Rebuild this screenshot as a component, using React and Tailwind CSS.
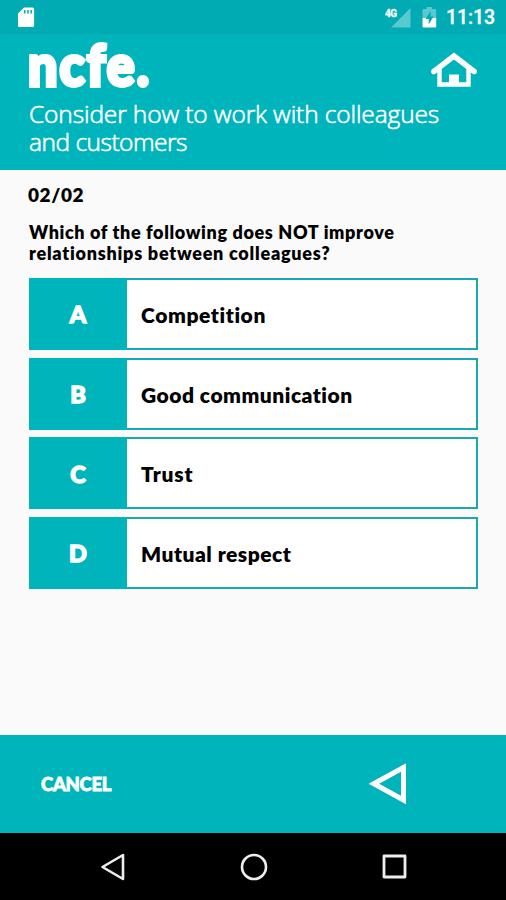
const options = [
  { letter: 'A', text: 'Competition', spacing: 'tracking-[0.6px]' },
  { letter: 'B', text: 'Good communication', spacing: 'tracking-[0.5px]' },
  { letter: 'C', text: 'Trust', spacing: 'tracking-[0.8px]' },
  { letter: 'D', text: 'Mutual respect', spacing: 'tracking-[0.5px]' },
];

function StatusBar() {
  return (
    <div className="flex h-[34px] shrink-0 items-center bg-[#00abb3] pl-[17px] pr-[11px] text-white">
      <svg className="h-[22px] w-[18px]" viewBox="0 0 18 22">
        <path d="M7 1.5h8.500a1.600 1.600 0 0 1 1.600 1.600v16.300a1.600 1.600 0 0 1-1.600 1.600h-13A1.600 1.600 0 0 1 1 19.400V7.500z" fill="#fff" />
        <path d="M7.700 4v3.500M11 4v3.500M14.200 4v3.500" stroke="#00abb3" strokeWidth="1.500" />
      </svg>
      <div className="ml-auto flex items-center">
        <svg className="h-[22px] w-[26px]" viewBox="0 0 26 22">
          <path d="M25.500 2v19.500H6z" fill="#58c9ce" />
          <text x="0" y="10.500" fill="#fff" stroke="#fff" strokeWidth="0.300" fontFamily="Roboto" fontWeight="700" fontSize="10" textLength="12">4G</text>
        </svg>
        <svg className="ml-[11px] h-[22px] w-[15px]" viewBox="0 0 15 22">
          <path d="M4.500 1h5.500v2h3.200q1 0 1 1v8H.5V4q0-1 1-1h3z" fill="#58c9ce" />
          <path d="M.5 12h13.700v8.500q0 1-1 1H1.500q-1 0-1-1z" fill="#fff" />
          <path d="M8.700 5 3.500 13h3.200v5.500L11.500 10.500H8.700z" fill="#00abb3" />
        </svg>
        <span className="ml-[9px] mt-[2px] font-['Roboto',sans-serif] text-[19.5px] font-medium leading-[32px] tracking-[-0.1px] [-webkit-text-stroke:0.3px_white]">11:13</span>
      </div>
    </div>
  );
}

function Header() {
  return (
    <header className="flex h-[136px] shrink-0 flex-col bg-[#00b4bc] pl-[29px] pr-[29px] text-white">
      <div className="flex h-[66px] justify-between">
        <span className="-ml-px origin-top scale-y-[1.1] font-['Lato',sans-serif] text-[52px] font-black leading-[55px] tracking-[2px] [-webkit-text-stroke:3.6px_white]">ncfe.</span>
        <svg className="mt-[18px] h-[36px] w-[46px]" viewBox="0 0 46 36" fill="none" stroke="#fff">
          <path d="M2.800 19.500 23 4 43.200 19.500" strokeWidth="5.400" strokeLinecap="round" />
          <path d="M8.500 16.500V32.500H37.500V16.500" strokeWidth="4.400" />
          <path d="M18 22.500h10v10H18z" fill="#fff" stroke="none" />
        </svg>
      </div>
      <h1 className="whitespace-nowrap font-['Open_Sans',sans-serif] text-[24.5px] font-light leading-[28px] tracking-[-0.120px] [-webkit-text-stroke:0.6px_white]">
        Consider how to work with colleagues
        <br />
        <span className="tracking-[-0.5px]">and customers</span>
      </h1>
    </header>
  );
}

function Option({ letter, text, spacing }) {
  return (
    <div className="flex h-[72px] border-2 border-[#18a9af] bg-white">
      <div className="-my-[2px] -ml-[2px] flex w-[98px] items-center justify-center bg-[#00b4bc] pt-[2px] font-['Lato',sans-serif] text-[23.5px] font-black text-white [-webkit-text-stroke:1.4px_white]">
        {letter}
      </div>
      <div className={`flex items-center whitespace-nowrap pl-[14px] pt-[2px] text-[21px] ${spacing}`}>{text}</div>
    </div>
  );
}

export default function App() {
  return (
    <div className="flex h-[900px] w-[506px] flex-col overflow-hidden bg-[#fafafa] text-black">
      <StatusBar />
      <Header />
      <main className="flex flex-1 flex-col pl-[29px] pr-[28px] pt-[12px] font-['Lato',sans-serif] font-extrabold">
        <p className="-ml-px text-[19px] leading-[26px] tracking-[0.6px]">02/02</p>
        <p className="mt-[14px] text-[18px] leading-[21px]">
          <span className="block whitespace-nowrap tracking-[0.630px]">Which of the following does NOT improve</span>
          <span className="block whitespace-nowrap tracking-[0.750px]">relationships between colleagues?</span>
        </p>
        <div className="mt-[14px] flex flex-col gap-[7.600px]">
          {options.map((o) => <Option key={o.letter} {...o} />)}
        </div>
      </main>
      <footer className="flex h-[98px] shrink-0 items-center justify-between bg-[#00b4bc] pl-[41px] pr-[99px]">
        <span className="pt-[2px] font-['Lato',sans-serif] text-[18.5px] font-black tracking-[-0.3px] text-white [-webkit-text-stroke:0.8px_white]">CANCEL</span>
        <svg className="h-[42px] w-[38px]" viewBox="0 0 38 42" fill="none" stroke="#fff" strokeWidth="5">
          <path d="M4.800 20.700 34.500 4.500V37z" />
        </svg>
      </footer>
      <nav className="flex h-[67px] shrink-0 items-center justify-between bg-black pl-[100px] pr-[99px]">
        <svg className="h-[28px] w-[25px]" viewBox="0 0 25 28" fill="none" stroke="#eee" strokeWidth="2.600" strokeLinejoin="round">
          <path d="M2.500 14 23 2V26z" />
        </svg>
        <svg className="h-[28px] w-[28px]" viewBox="0 0 28 28" fill="none" stroke="#eee" strokeWidth="2.600">
          <circle cx="14" cy="14" r="12" />
        </svg>
        <svg className="h-[25px] w-[25px]" viewBox="0 0 25 25" fill="none" stroke="#eee" strokeWidth="2.800" strokeLinejoin="round">
          <path d="M2 2h21v21H2z" />
        </svg>
      </nav>
    </div>
  );
}
